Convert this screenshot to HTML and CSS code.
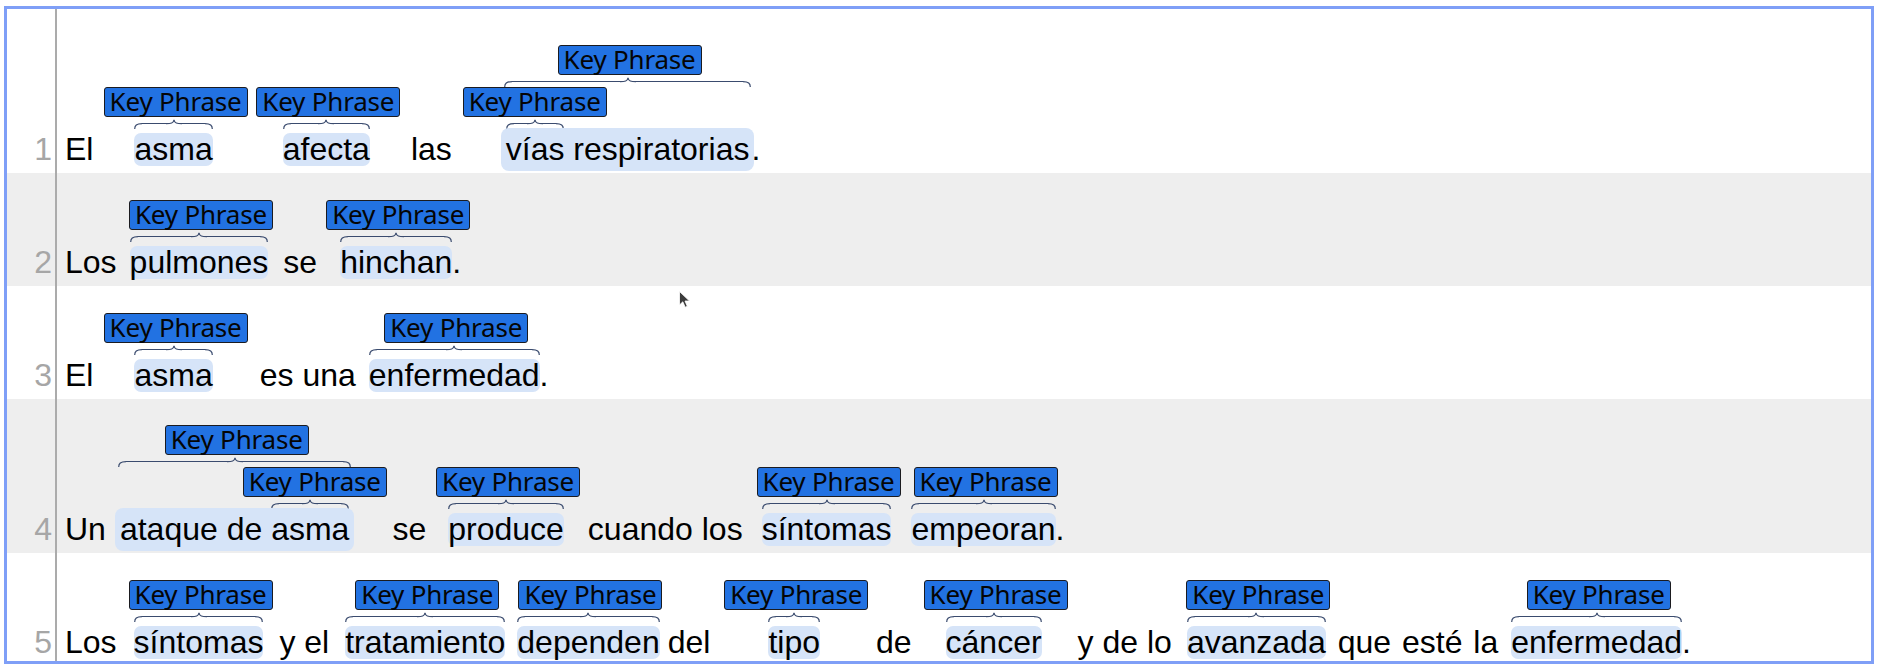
FILE: index.html
```html
<!DOCTYPE html>
<html lang="es">
<head>
<meta charset="utf-8">
<title>Key Phrases</title>
<link rel="stylesheet" href="styles.css">
</head>
<body>
<div class="frame">

  <div class="row r1">
    <div class="num">1</div>
    <div class="line">
      <span class="w">El</span>
      <div class="ch g41"><div class="lab">Key Phrase</div><div class="br"><svg class="be" viewBox="0 0 8 10"><path d="M0.7 10C0.7 6.5 2.5 4.6 8 4.6"/></svg><i></i><svg class="bc" viewBox="0 0 16 10"><path d="M0 4.6C5 4.6 7.6 4.2 8 0.7C8.4 4.2 11 4.6 16 4.6"/></svg><i></i><svg class="be" viewBox="0 0 8 10"><path d="M0 4.6C5.5 4.6 7.3 6.5 7.3 10"/></svg></div><span class="w hl">asma</span></div>
      <div class="ch g70"><div class="lab">Key Phrase</div><div class="br"><svg class="be" viewBox="0 0 8 10"><path d="M0.7 10C0.7 6.5 2.5 4.6 8 4.6"/></svg><i></i><svg class="bc" viewBox="0 0 16 10"><path d="M0 4.6C5 4.6 7.6 4.2 8 0.7C8.4 4.2 11 4.6 16 4.6"/></svg><i></i><svg class="be" viewBox="0 0 8 10"><path d="M0 4.6C5.5 4.6 7.3 6.5 7.3 10"/></svg></div><span class="w hl">afecta</span></div>
      <span class="w g41">las</span>
      <div class="ch g49">
        <div class="lab">Key Phrase</div>
        <div class="br up"><svg class="be" viewBox="0 0 8 10"><path d="M0.7 10C0.7 6.5 2.5 4.6 8 4.6"/></svg><i></i><svg class="bc" viewBox="0 0 16 10"><path d="M0 4.6C5 4.6 7.6 4.2 8 0.7C8.4 4.2 11 4.6 16 4.6"/></svg><i></i><svg class="be" viewBox="0 0 8 10"><path d="M0 4.6C5.5 4.6 7.3 6.5 7.3 10"/></svg></div>
        <div class="inner">
          <div class="ch"><div class="lab">Key Phrase</div><div class="br nl"><svg class="be" viewBox="0 0 8 10"><path d="M0.7 10C0.7 6.5 2.5 4.6 8 4.6"/></svg><i></i><svg class="bc" viewBox="0 0 16 10"><path d="M0 4.6C5 4.6 7.6 4.2 8 0.7C8.4 4.2 11 4.6 16 4.6"/></svg><i></i><svg class="be" viewBox="0 0 8 10"><path d="M0 4.6C5.5 4.6 7.3 6.5 7.3 10"/></svg></div><span class="w hl nx nl">vías</span></div>
          <span class="w hl nx nr"> respiratorias</span>
        </div>
      </div>
      <span class="w tight">.</span>
    </div>
  </div>

  <div class="row alt">
    <div class="num">2</div>
    <div class="line">
      <span class="w">Los</span>
      <div class="ch g13"><div class="lab">Key Phrase</div><div class="br"><svg class="be" viewBox="0 0 8 10"><path d="M0.7 10C0.7 6.5 2.5 4.6 8 4.6"/></svg><i></i><svg class="bc" viewBox="0 0 16 10"><path d="M0 4.6C5 4.6 7.6 4.2 8 0.7C8.4 4.2 11 4.6 16 4.6"/></svg><i></i><svg class="be" viewBox="0 0 8 10"><path d="M0 4.6C5.5 4.6 7.3 6.5 7.3 10"/></svg></div><span class="w hl">pulmones</span></div>
      <span class="w g15">se</span>
      <div class="ch g23"><div class="lab">Key Phrase</div><div class="br"><svg class="be" viewBox="0 0 8 10"><path d="M0.7 10C0.7 6.5 2.5 4.6 8 4.6"/></svg><i></i><svg class="bc" viewBox="0 0 16 10"><path d="M0 4.6C5 4.6 7.6 4.2 8 0.7C8.4 4.2 11 4.6 16 4.6"/></svg><i></i><svg class="be" viewBox="0 0 8 10"><path d="M0 4.6C5.5 4.6 7.3 6.5 7.3 10"/></svg></div><span class="w hl">hinchan</span></div>
      <span class="w">.</span>
    </div>
  </div>

  <div class="row">
    <div class="num">3</div>
    <div class="line">
      <span class="w">El</span>
      <div class="ch g41"><div class="lab">Key Phrase</div><div class="br"><svg class="be" viewBox="0 0 8 10"><path d="M0.7 10C0.7 6.5 2.5 4.6 8 4.6"/></svg><i></i><svg class="bc" viewBox="0 0 16 10"><path d="M0 4.6C5 4.6 7.6 4.2 8 0.7C8.4 4.2 11 4.6 16 4.6"/></svg><i></i><svg class="be" viewBox="0 0 8 10"><path d="M0 4.6C5.5 4.6 7.3 6.5 7.3 10"/></svg></div><span class="w hl">asma</span></div>
      <span class="w g47">es una</span>
      <div class="ch g13"><div class="lab">Key Phrase</div><div class="br"><svg class="be" viewBox="0 0 8 10"><path d="M0.7 10C0.7 6.5 2.5 4.6 8 4.6"/></svg><i></i><svg class="bc" viewBox="0 0 16 10"><path d="M0 4.6C5 4.6 7.6 4.2 8 0.7C8.4 4.2 11 4.6 16 4.6"/></svg><i></i><svg class="be" viewBox="0 0 8 10"><path d="M0 4.6C5.5 4.6 7.3 6.5 7.3 10"/></svg></div><span class="w hl">enfermedad</span></div>
      <span class="w">.</span>
    </div>
  </div>

  <div class="row alt r4">
    <div class="num">4</div>
    <div class="line">
      <span class="w">Un</span>
      <div class="ch g9">
        <div class="lab">Key Phrase</div>
        <div class="br up"><svg class="be" viewBox="0 0 8 10"><path d="M0.7 10C0.7 6.5 2.5 4.6 8 4.6"/></svg><i></i><svg class="bc" viewBox="0 0 16 10"><path d="M0 4.6C5 4.6 7.6 4.2 8 0.7C8.4 4.2 11 4.6 16 4.6"/></svg><i></i><svg class="be" viewBox="0 0 8 10"><path d="M0 4.6C5.5 4.6 7.3 6.5 7.3 10"/></svg></div>
        <div class="inner">
          <span class="w hl nx nl">ataque de </span>
          <div class="ch"><div class="lab">Key Phrase</div><div class="br nr"><svg class="be" viewBox="0 0 8 10"><path d="M0.7 10C0.7 6.5 2.5 4.6 8 4.6"/></svg><i></i><svg class="bc" viewBox="0 0 16 10"><path d="M0 4.6C5 4.6 7.6 4.2 8 0.7C8.4 4.2 11 4.6 16 4.6"/></svg><i></i><svg class="be" viewBox="0 0 8 10"><path d="M0 4.6C5.5 4.6 7.3 6.5 7.3 10"/></svg></div><span class="w hl nx nr">asma</span></div>
        </div>
      </div>
      <span class="w g38">se</span>
      <div class="ch g22"><div class="lab">Key Phrase</div><div class="br"><svg class="be" viewBox="0 0 8 10"><path d="M0.7 10C0.7 6.5 2.5 4.6 8 4.6"/></svg><i></i><svg class="bc" viewBox="0 0 16 10"><path d="M0 4.6C5 4.6 7.6 4.2 8 0.7C8.4 4.2 11 4.6 16 4.6"/></svg><i></i><svg class="be" viewBox="0 0 8 10"><path d="M0 4.6C5.5 4.6 7.3 6.5 7.3 10"/></svg></div><span class="w hl">produce</span></div>
      <span class="w g24">cuando los</span>
      <div class="ch g19"><div class="lab">Key Phrase</div><div class="br"><svg class="be" viewBox="0 0 8 10"><path d="M0.7 10C0.7 6.5 2.5 4.6 8 4.6"/></svg><i></i><svg class="bc" viewBox="0 0 16 10"><path d="M0 4.6C5 4.6 7.6 4.2 8 0.7C8.4 4.2 11 4.6 16 4.6"/></svg><i></i><svg class="be" viewBox="0 0 8 10"><path d="M0 4.6C5.5 4.6 7.3 6.5 7.3 10"/></svg></div><span class="w hl">síntomas</span></div>
      <div class="ch g20"><div class="lab">Key Phrase</div><div class="br"><svg class="be" viewBox="0 0 8 10"><path d="M0.7 10C0.7 6.5 2.5 4.6 8 4.6"/></svg><i></i><svg class="bc" viewBox="0 0 16 10"><path d="M0 4.6C5 4.6 7.6 4.2 8 0.7C8.4 4.2 11 4.6 16 4.6"/></svg><i></i><svg class="be" viewBox="0 0 8 10"><path d="M0 4.6C5.5 4.6 7.3 6.5 7.3 10"/></svg></div><span class="w hl">empeoran</span></div>
      <span class="w">.</span>
    </div>
  </div>

  <div class="row">
    <div class="num">5</div>
    <div class="line">
      <span class="w">Los</span>
      <div class="ch g17"><div class="lab">Key Phrase</div><div class="br"><svg class="be" viewBox="0 0 8 10"><path d="M0.7 10C0.7 6.5 2.5 4.6 8 4.6"/></svg><i></i><svg class="bc" viewBox="0 0 16 10"><path d="M0 4.6C5 4.6 7.6 4.2 8 0.7C8.4 4.2 11 4.6 16 4.6"/></svg><i></i><svg class="be" viewBox="0 0 8 10"><path d="M0 4.6C5.5 4.6 7.3 6.5 7.3 10"/></svg></div><span class="w hl">síntomas</span></div>
      <span class="w g16">y el</span>
      <div class="ch g16"><div class="lab">Key Phrase</div><div class="br"><svg class="be" viewBox="0 0 8 10"><path d="M0.7 10C0.7 6.5 2.5 4.6 8 4.6"/></svg><i></i><svg class="bc" viewBox="0 0 16 10"><path d="M0 4.6C5 4.6 7.6 4.2 8 0.7C8.4 4.2 11 4.6 16 4.6"/></svg><i></i><svg class="be" viewBox="0 0 8 10"><path d="M0 4.6C5.5 4.6 7.3 6.5 7.3 10"/></svg></div><span class="w hl">tratamiento</span></div>
      <div class="ch g12"><div class="lab">Key Phrase</div><div class="br"><svg class="be" viewBox="0 0 8 10"><path d="M0.7 10C0.7 6.5 2.5 4.6 8 4.6"/></svg><i></i><svg class="bc" viewBox="0 0 16 10"><path d="M0 4.6C5 4.6 7.6 4.2 8 0.7C8.4 4.2 11 4.6 16 4.6"/></svg><i></i><svg class="be" viewBox="0 0 8 10"><path d="M0 4.6C5.5 4.6 7.3 6.5 7.3 10"/></svg></div><span class="w hl">dependen</span></div>
      <span class="w g8">del</span>
      <div class="ch g58"><div class="lab">Key Phrase</div><div class="br"><svg class="be" viewBox="0 0 8 10"><path d="M0.7 10C0.7 6.5 2.5 4.6 8 4.6"/></svg><i></i><svg class="bc" viewBox="0 0 16 10"><path d="M0 4.6C5 4.6 7.6 4.2 8 0.7C8.4 4.2 11 4.6 16 4.6"/></svg><i></i><svg class="be" viewBox="0 0 8 10"><path d="M0 4.6C5.5 4.6 7.3 6.5 7.3 10"/></svg></div><span class="w hl">tipo</span></div>
      <span class="w g56">de</span>
      <div class="ch g34"><div class="lab">Key Phrase</div><div class="br"><svg class="be" viewBox="0 0 8 10"><path d="M0.7 10C0.7 6.5 2.5 4.6 8 4.6"/></svg><i></i><svg class="bc" viewBox="0 0 16 10"><path d="M0 4.6C5 4.6 7.6 4.2 8 0.7C8.4 4.2 11 4.6 16 4.6"/></svg><i></i><svg class="be" viewBox="0 0 8 10"><path d="M0 4.6C5.5 4.6 7.3 6.5 7.3 10"/></svg></div><span class="w hl">cáncer</span></div>
      <span class="w g36">y de lo</span>
      <div class="ch g15"><div class="lab">Key Phrase</div><div class="br"><svg class="be" viewBox="0 0 8 10"><path d="M0.7 10C0.7 6.5 2.5 4.6 8 4.6"/></svg><i></i><svg class="bc" viewBox="0 0 16 10"><path d="M0 4.6C5 4.6 7.6 4.2 8 0.7C8.4 4.2 11 4.6 16 4.6"/></svg><i></i><svg class="be" viewBox="0 0 8 10"><path d="M0 4.6C5.5 4.6 7.3 6.5 7.3 10"/></svg></div><span class="w hl">avanzada</span></div>
      <span class="w g12 wide">que esté la</span>
      <div class="ch g13"><div class="lab">Key Phrase</div><div class="br"><svg class="be" viewBox="0 0 8 10"><path d="M0.7 10C0.7 6.5 2.5 4.6 8 4.6"/></svg><i></i><svg class="bc" viewBox="0 0 16 10"><path d="M0 4.6C5 4.6 7.6 4.2 8 0.7C8.4 4.2 11 4.6 16 4.6"/></svg><i></i><svg class="be" viewBox="0 0 8 10"><path d="M0 4.6C5.5 4.6 7.3 6.5 7.3 10"/></svg></div><span class="w hl">enfermedad</span></div>
      <span class="w">.</span>
    </div>
  </div>

  <svg class="cursor" viewBox="0 0 11 17"><path d="M0.5 0.5V14L3.8 10.8L6.2 16.2L8.3 15.3L6 10H10.5Z"/></svg>
</div>
</body>
</html>
```
FILE: styles.css
```css
* { box-sizing: border-box; }

html, body {
  margin: 0;
  background: #ffffff;
}

body {
  font-family: "Liberation Sans", Arial, sans-serif;
  color: #000;
}

.frame {
  position: relative;
  margin: 6px 5px 0 4px;
  height: 658px;
  border: 3px solid #7f9ff7;
  overflow: hidden;
}

.row {
  display: flex;
  height: 113px;
  background: #ffffff;
}
.row.alt { background: #eeeeee; }
.row.r1 { height: 164px; }
.row.r4 { height: 154px; }

.num {
  flex: none;
  width: 48px;
  align-self: flex-end;
  margin-bottom: 7px;
  padding-right: 3px;
  text-align: right;
  font-size: 32px;
  line-height: 33px;
  color: #a6a6a6;
}

.line {
  flex: 1;
  display: flex;
  align-items: flex-end;
  border-left: 2px solid #ababab;
  padding: 0 0 7px 8px;
}

.w {
  display: block;
  flex: none;
  font-size: 32px;
  line-height: 33px;
  white-space: pre;
}
.wide { word-spacing: 2px; }
.tight { margin-left: -3px; }

.hl {
  background: #d6e4f8;
  border-radius: 7px;
}
.hl.nx {
  padding-top: 5px;
  padding-bottom: 5px;
  margin-top: -5px;
  margin-bottom: -5px;
}
.hl.nx.nl {
  padding-left: 5px;
  border-radius: 8px 0 0 8px;
}
.hl.nx.nr {
  padding-right: 5px;
  border-radius: 0 8px 8px 0;
}

.ch {
  flex: none;
  display: flex;
  flex-direction: column;
  align-items: center;
}

.inner {
  display: flex;
  align-items: flex-end;
}

.lab {
  flex: none;
  width: 144px;
  height: 30px;
  margin: 0 -102px 0 -98px;
  background: #2272e2;
  border: 1.5px solid #1b1b1f;
  border-radius: 3px;
  font-family: "Noto Sans", "Open Sans", sans-serif;
  font-size: 26px;
  line-height: 26px;
  letter-spacing: -0.2px;
  text-align: center;
  color: #050505;
  white-space: nowrap;
}

.br {
  align-self: stretch;
  display: flex;
  height: 10px;
  margin: 2px 0 4px;
}
.br.up { margin: 2px 3px 0; }
.br.nl { margin-left: 5px; }
.br.nr { margin-right: 5px; }

.br svg {
  flex: none;
  height: 10px;
  overflow: visible;
  fill: none;
  stroke: #3a4b6e;
  stroke-width: 1.2;
}
.br .be { width: 8px; }
.br .bc { width: 16px; }
.br i {
  flex: 1;
  height: 5.2px;
  border-bottom: 1.2px solid #3a4b6e;
}

.g8 { margin-left: 8px; }
.g9 { margin-left: 9px; }
.g12 { margin-left: 12px; }
.g13 { margin-left: 13px; }
.g15 { margin-left: 15px; }
.g16 { margin-left: 16px; }
.g17 { margin-left: 17px; }
.g19 { margin-left: 19px; }
.g20 { margin-left: 20px; }
.g22 { margin-left: 22px; }
.g23 { margin-left: 23px; }
.g24 { margin-left: 24px; }
.g34 { margin-left: 34px; }
.g36 { margin-left: 36px; }
.g38 { margin-left: 38px; }
.g41 { margin-left: 41px; }
.g47 { margin-left: 47px; }
.g49 { margin-left: 49px; }
.g56 { margin-left: 56px; }
.g58 { margin-left: 58px; }
.g70 { margin-left: 70px; }

.cursor {
  position: absolute;
  left: 672px;
  top: 282px;
  width: 11px;
  height: 17px;
  fill: #3c3c3c;
  stroke: #ffffff;
  stroke-width: 0.8;
}
```
